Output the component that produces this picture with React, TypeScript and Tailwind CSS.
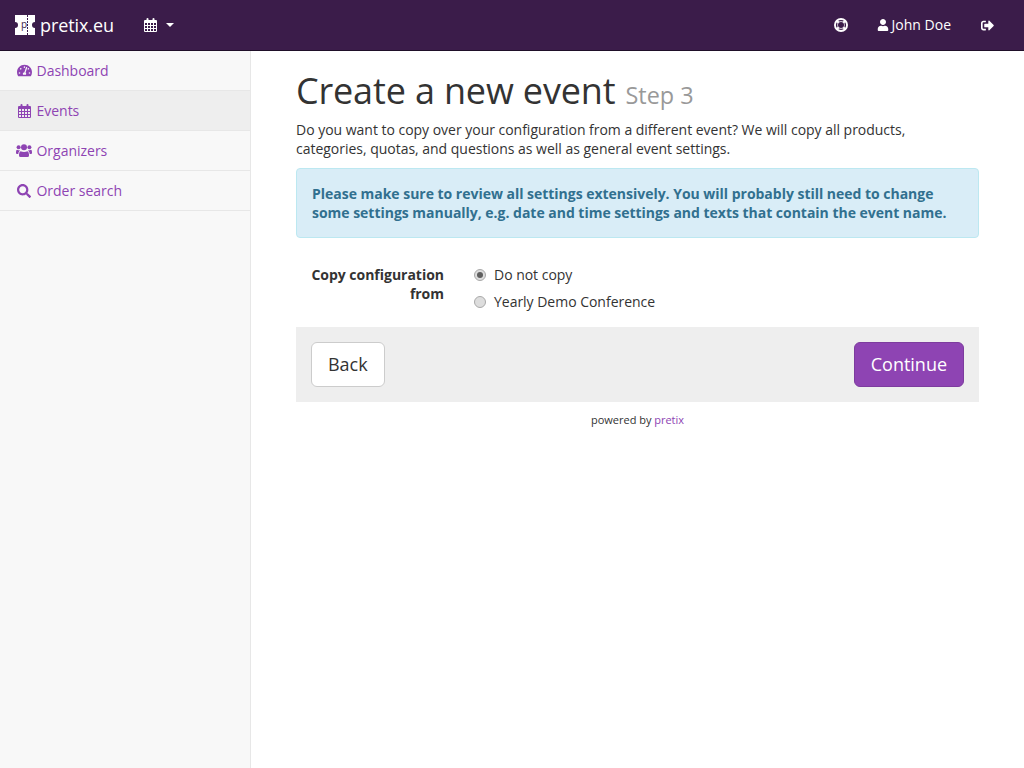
import { FaSearch, FaSignOutAlt, FaTachometerAlt, FaUser } from "react-icons/fa";

const font = { fontFamily: '"Open Sans", sans-serif' };

function Logo() {
  return (
    <span className="relative block h-[20px] w-[20px]">
      <svg width="20" height="20" viewBox="0 0 20 20" className="absolute inset-0">
        <path d="M0 0H20V7A3 3 0 0 0 20 13V20H0V13A3 3 0 0 0 0 7Z" fill="#fff" />
        <path d="M12.5 0V20" stroke="#3b1c4a" strokeWidth="1" strokeDasharray="2 1" />
      </svg>
      <span className="absolute left-[6px] top-[2px] text-[10px] leading-[15px] font-normal text-[#3b1c4a]">p</span>
    </span>
  );
}

function CalendarIcon({ className }: { className?: string }) {
  return (
    <svg viewBox="0 0 13 14" width="13" height="14" fill="currentColor" className={className}>
      <path
        fillRule="evenodd"
        d="M1 2H2.5V1A1 1 0 0 1 4.5 1V2H8.5V1A1 1 0 0 1 10.5 1V2H12A1 1 0 0 1 13 3V13A1 1 0 0 1 12 14H1A1 1 0 0 1 0 13V3A1 1 0 0 1 1 2ZM1 5V7H3V5ZM4 5V7H6V5ZM7 5V7H9V5ZM10 5V7H12V5ZM1 8V10H3V8ZM4 8V10H6V8ZM7 8V10H9V8ZM10 8V10H12V8ZM1 11V13H3V11ZM4 11V13H6V11ZM7 11V13H9V11ZM10 11V13H12V11Z"
      />
    </svg>
  );
}

function LifeRingIcon() {
  return (
    <svg viewBox="0 0 14 14" width="14" height="14">
      <circle cx="7" cy="7" r="7" fill="#fff" />
      <circle cx="7" cy="7" r="4.4" fill="none" stroke="#3b1c4a" strokeWidth="1.4" />
      <path d="M2.5 2.5L5 5M11.5 2.5L9 5M2.5 11.5L5 9M11.5 11.5L9 9" stroke="#fff" strokeWidth="2.2" />
      <circle cx="7" cy="7" r="3" fill="#3b1c4a" />
    </svg>
  );
}

function UsersIcon() {
  return (
    <svg viewBox="0 0 16 13" width="16" height="13" fill="currentColor">
      <circle cx="8" cy="3.3" r="3" />
      <path d="M4.5 7.2Q8 8.6 11.5 7.2Q13 8 13 10.5V11.5Q13 13 11.5 13H4.5Q3 13 3 11.5V10.5Q3 8 4.5 7.2Z" />
      <circle cx="2.6" cy="3.2" r="2" />
      <circle cx="13.4" cy="3.2" r="2" />
      <path d="M0 8Q0 5.8 1.2 5.8Q2.5 6.6 3.8 6.2Q3.6 7.2 3.2 7.6Q2.3 8.5 2.3 10H1Q0 10 0 9Z" />
      <path d="M16 8Q16 5.8 14.8 5.8Q13.5 6.6 12.2 6.2Q12.4 7.2 12.8 7.6Q13.7 8.5 13.7 10H15Q16 10 16 9Z" />
    </svg>
  );
}

function NavItem({ icon, label, active }: { icon: React.ReactNode; label: string; active?: boolean }) {
  return (
    <a
      href="#"
      className={`flex h-10 items-center border-b border-[#e7e7e7] pl-[16px] text-sm tracking-[-0.02px] text-[#8e44b3] ${active ? "bg-[#eeeeee]" : ""}`}
    >
      <span className="mr-[4.5px] flex w-[16px] justify-center">{icon}</span>
      {label}
    </a>
  );
}

function Radio({ checked, label }: { checked?: boolean; label: string }) {
  return (
    <label className="flex h-[27px] items-center text-sm text-[#333]">
      <span className="mr-2 flex h-3 w-3 items-center justify-center rounded-full border border-[#a9a9a9] bg-[#dddddd]">
        {checked && <span className="h-[6px] w-[6px] rounded-full bg-[#5f5f5f]" />}
      </span>
      {label}
    </label>
  );
}

export default function App() {
  return (
    <div className="flex h-[768px] flex-col overflow-hidden bg-white" style={font}>
      <header className="flex h-[51px] shrink-0 items-center border-b border-[#1f0f29] bg-[#3b1c4a] text-white">
        <a href="#" className="ml-[15px] flex items-center">
          <Logo />
          <span className="ml-[5px] text-lg leading-none tracking-[-0.1px]">pretix.eu</span>
        </a>
        <span className="ml-[30px] flex items-center">
          <CalendarIcon />
          <span className="ml-[9px] h-0 w-0 border-x-4 border-t-4 border-x-transparent border-t-white" />
        </span>
        <div className="ml-auto flex items-center text-sm">
          <LifeRingIcon />
          <span className="ml-[29px] flex items-center">
            <FaUser className="mr-[3px] text-[12px]" />
            John Doe
          </span>
          <FaSignOutAlt className="ml-[30px] mr-[30px] text-[13px]" />
        </div>
      </header>
      <div className="flex flex-1">
        <aside className="w-[251px] shrink-0 border-r border-[#e7e7e7] bg-[#f8f8f8]">
          <NavItem icon={<FaTachometerAlt className="text-[15px]" />} label="Dashboard" />
          <NavItem icon={<CalendarIcon />} label="Events" active />
          <NavItem icon={<UsersIcon />} label="Organizers" />
          <NavItem icon={<FaSearch className="text-[14px]" />} label="Order search" />
        </aside>
        <main className="flex-1 px-[45px] text-sm leading-[19px] tracking-[-0.02px] text-[#333]">
          <h1 className="mt-[20px] mb-[5px] text-[36px] leading-[40px] font-normal tracking-[-0.16px]">
            Create a new event <small className="ml-[1px] text-[23.4px] tracking-normal text-[#999]">Step 3</small>
          </h1>
          <p className="mb-[10px]">
            Do you want to copy over your configuration from a different event? We will copy all products,
            categories, quotas, and questions as well as general event settings.
          </p>
          <div className="mb-[20px] rounded border border-[#bce8f1] bg-[#d9edf7] px-[15px] py-[15px] font-bold text-[#31708f]">
            Please make sure to review all settings extensively. You will probably still need to change some
            settings manually, e.g. date and time settings and texts that contain the event name.
          </div>
          <div className="mb-[12px] flex">
            <label className="w-[148px] pt-[7px] text-right font-bold">Copy configuration from</label>
            <div className="ml-[30px] pt-[3px]">
              <Radio checked label="Do not copy" />
              <Radio label="Yearly Demo Conference" />
            </div>
          </div>
          <div className="flex h-[75px] items-center justify-between bg-[#eeeeee] px-[15px]">
            <button className="h-[45px] rounded-md border border-[#cccccc] bg-white px-4 pb-[2px] text-lg text-[#333]">Back</button>
            <button className="h-[45px] rounded-md border border-[#7d3c9e] bg-[#8e44b3] px-4 pb-[2px] text-lg text-white">Continue</button>
          </div>
          <p className="mt-[10px] text-center text-[11px] leading-[16px]">
            powered by <a href="#" className="text-[#8e44b3]">pretix</a>
          </p>
        </main>
      </div>
    </div>
  );
}
